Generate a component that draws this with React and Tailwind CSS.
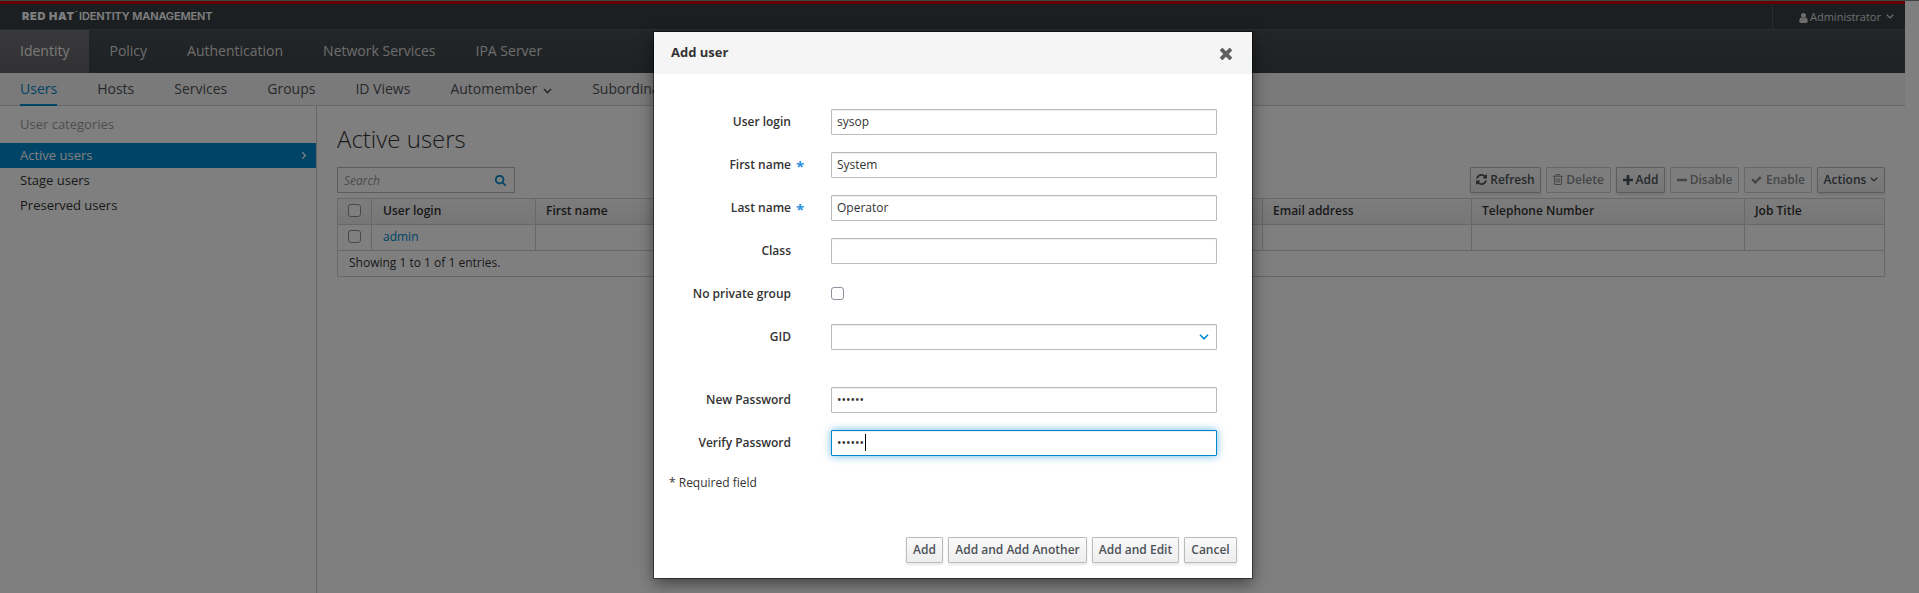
import React from "react";

const ICONS = {
  user: ["0 128 1280 1536", "M1280 1399q0 109-62.5 187t-150.5 78h-854q-88 0-150.5-78t-62.5-187q0-85 8.5-160.5t31.5-152 58.5-131 94-89 134.5-34.5q131 128 313 128t313-128q76 0 134.5 34.5t94 89 58.5 131 31.5 152 8.5 160.5zm-256-887q0 159-112.5 271.5t-271.5 112.5-271.5-112.5-112.5-271.5 112.5-271.5 271.5-112.5 271.5 112.5 112.5 271.5z"],
  refresh: ["128 128 1536 1536", "M1639 1056q0 5-1 7-64 268-268 434.5t-478 166.5q-146 0-282.5-55t-243.5-157l-129 129q-19 19-45 19t-45-19-19-45v-448q0-26 19-45t45-19h448q26 0 45 19t19 45-19 45l-137 137q71 66 161 102t187 36q134 0 250-65t186-179q11-17 53-117 8-23 30-23h192q13 0 22.5 9.5t9.5 22.5zm25-800v448q0 26-19 45t-45 19h-448q-26 0-45-19t-19-45 19-45l138-138q-148-137-349-137-134 0-250 65t-186 179q-11 17-53 117-8 23-30 23h-199q-13 0-22.5-9.5t-9.5-22.5v-7q65-268 270-434.5t480-166.5q146 0 284 55.5t245 156.5l130-129q19-19 45-19t45 19 19 45z"],
  trash: ["192 128 1408 1536", "M704 736v576q0 14-9 23t-23 9h-64q-14 0-23-9t-9-23v-576q0-14 9-23t23-9h64q14 0 23 9t9 23zm256 0v576q0 14-9 23t-23 9h-64q-14 0-23-9t-9-23v-576q0-14 9-23t23-9h64q14 0 23 9t9 23zm256 0v576q0 14-9 23t-23 9h-64q-14 0-23-9t-9-23v-576q0-14 9-23t23-9h64q14 0 23 9t9 23zm128 724v-948h-896v948q0 22 7 40.5t14.5 27 10.5 8.5h832q3 0 10.5-8.5t14.5-27 7-40.5zm-672-1076h448l-48-117q-7-9-17-11h-317q-10 2-17 11zm928 32v64q0 14-9 23t-23 9h-96v948q0 83-47 143.5t-113 60.5h-832q-66 0-113-58.5t-47-141.5v-952h-96q-14 0-23-9t-9-23v-64q0-14 9-23t23-9h309l70-167q15-37 54-63t79-26h320q40 0 79 26t54 63l70 167h309q14 0 23 9t9 23z"],
  plus: ["192 128 1408 1408", "M1600 736v192q0 40-28 68t-68 28h-416v416q0 40-28 68t-68 28h-192q-40 0-68-28t-28-68v-416h-416q-40 0-68-28t-28-68v-192q0-40 28-68t68-28h416v-416q0-40 28-68t68-28h192q40 0 68 28t28 68v416h416q40 0 68 28t28 68z"],
  minus: ["192 128 1408 1408", "M1600 736v192q0 40-28 68t-68 28h-1216q-40 0-68-28t-28-68v-192q0-40 28-68t68-28h1216q40 0 68 28t28 68z"],
  check: ["100 128 1600 1408", "M1671 566q0 40-28 68l-724 724-136 136q-28 28-68 28t-68-28l-136-136-362-362q-28-28-28-68t28-68l136-136q28-28 68-28t68 28l294 295 656-657q28-28 68-28t68 28l136 136q28 28 28 68z"],
  times: ["302 366 1188 1188", "M1490 1322q0 40-28 68l-136 136q-28 28-68 28t-68-28l-294-294-294 294q-28 28-68 28t-68-28l-136-136q-28-28-28-68t28-68l294-294-294-294q-28-28-28-68t28-68l136-136q28-28 68-28t68 28l294 294 294-294q28-28 68-28t68 28l136 136q28 28 28 68t-28 68l-294 294 294 294q28 28 28 68z"],
  search: ["64 128 1664 1664", "M1216 832q0-185-131.5-316.5t-316.5-131.5-316.5 131.5-131.5 316.5 131.5 316.5 316.5 131.5 316.5-131.5 131.5-316.5zm512 832q0 52-38 90t-90 38q-54 0-90-38l-343-342q-179 124-399 124-143 0-273.5-55.5t-225-150-150-225-55.5-273.5 55.5-273.5 150-225 225-150 273.5-55.5 273.5 55.5 225 150 150 225 55.5 273.5q0 220-124 399l343 343q37 37 37 90z"],
};

function Icon({ name, className }) {
  const [viewBox, d] = ICONS[name];
  return (
    <svg viewBox={viewBox} className={"shrink-0 fill-current " + className} aria-hidden="true">
      <path d={d} />
    </svg>
  );
}

function Chevron({ className }) {
  return (
    <svg viewBox="0 0 10 6" className={"shrink-0 fill-none stroke-current " + className} strokeWidth="1.6" aria-hidden="true">
      <path d="M1 .8l4 4 4-4" />
    </svg>
  );
}

function Checkbox({ className = "" }) {
  return <input type="checkbox" className={"size-[13px] appearance-none rounded-[3px] border border-[#8f8f9d] bg-white " + className} />;
}

function Button({ children, disabled, className = "" }) {
  const tone = disabled
    ? "border-[#d1d1d1] bg-[#fafafa] text-[#8b8d8f]"
    : "border-[#bbb] bg-linear-to-b from-[#fafafa] to-[#ededed] text-[#4d5258] shadow-[0_2px_3px_rgba(3,3,3,0.1)]";
  return (
    <button
      type="button"
      disabled={disabled}
      className={"flex h-[26px] shrink-0 items-center justify-center rounded-[1px] border pb-px text-xs font-semibold whitespace-nowrap " + tone + " " + className}
    >
      {children}
    </button>
  );
}

const TABS = ["Policy", "Authentication", "Network Services", "IPA Server"];
const SUBTABS = ["Hosts", "Services", "Groups", "ID Views"];
const COLUMNS = [
  ["User login", "w-[164px] pl-[11px]"],
  ["First name", "w-[182px] pl-[10px]"],
  ["Last name", "w-[181px] pl-[10px]"],
  ["Status", "w-[182px] pl-[10px]"],
  ["UID", "w-[182px] pl-[10px]"],
  ["Email address", "w-[209px] pl-[10px]"],
  ["Telephone Number", "w-[273px] pl-[10px]"],
  ["Job Title", "flex-1 pl-[10px]"],
];

function Header() {
  return (
    <header className="border-t-3 border-[#c00]">
      <div className="flex h-[26px] items-stretch justify-between border-b border-[#53565b] bg-[#393f44] text-white">
        <div className="flex items-center pb-px pl-[22px] font-['Inter'] text-[11px] leading-none whitespace-nowrap">
          <span className="w-[57px] font-black tracking-[0.7px]">RED HAT<span className="align-top text-[4px] tracking-normal">™</span></span>
          <span className="font-semibold tracking-[-0.12px]">IDENTITY MANAGEMENT</span>
        </div>
        <div className="flex w-[133px] items-center border-l border-[#53565b] pt-[2px] pl-[26px] text-[11px] text-[#dbdada]">
          <Icon name="user" className="h-[10px] w-[9px]" />
          <span className="ml-[2px]">Administrator</span>
          <Chevron className="mb-[3px] ml-[5px] h-[5px] w-[8px]" />
        </div>
      </div>
      <nav className="flex h-[43px] bg-linear-to-b from-[#474c50] to-[#3c4449] text-sm text-[#dbdada]">
        <a className="flex items-center bg-linear-to-b from-[#727276] to-[#646468] px-5 pb-px text-[#f1f1f1]">Identity</a>
        {TABS.map((t) => (
          <a key={t} className="flex items-center px-5 pb-px">{t}</a>
        ))}
      </nav>
      <nav className="flex h-[33px] gap-10 border-b border-[#d1d1d1] bg-[#f5f5f5] pl-5 text-sm text-[#4d5258]">
        <a className="-mb-px flex items-center border-b-2 border-[#0088ce] text-[#0088ce]">Users</a>
        {SUBTABS.map((t) => (
          <a key={t} className="flex items-center">{t}</a>
        ))}
        <a className="flex items-center">
          Automember
          <Chevron className="mt-[3px] ml-[6px] h-[6px] w-[9px]" />
        </a>
        <a className="flex items-center whitespace-nowrap">Subordinate IDs</a>
      </nav>
    </header>
  );
}

function Sidebar() {
  return (
    <aside className="flex w-[317px] shrink-0 flex-col border-r border-[#d1d1d1] text-[13px]">
      <h2 className="flex h-[37px] items-center pl-5 text-[#9c9c9c]">User categories</h2>
      <a className="flex h-[25px] items-center justify-between bg-[#0088ce] pr-[8px] pl-5 text-white">
        Active users
        <Chevron className="h-[5px] w-[8px] -rotate-90" />
      </a>
      <a className="flex h-[25px] items-center pl-5">Stage users</a>
      <a className="flex h-[25px] items-center pl-5">Preserved users</a>
    </aside>
  );
}

function UsersTable() {
  return (
    <div className="mt-[5px] border border-[#d1d1d1] text-xs">
      <div className="flex h-[26px] border-b border-[#d1d1d1] bg-linear-to-b from-[#fafafa] to-[#ededed] font-semibold">
        <div className="flex w-[33px] items-center justify-center">
          <Checkbox className="mb-[2px]" />
        </div>
        {COLUMNS.map(([label, box]) => (
          <div key={label} className={"flex items-center border-l border-[#d1d1d1] pb-px " + box}>{label}</div>
        ))}
      </div>
      <div className="flex h-[26px] border-b border-[#d1d1d1]">
        <div className="flex w-[33px] items-center justify-center">
          <Checkbox className="mb-[2px]" />
        </div>
        {COLUMNS.map(([label, box], i) => (
          <div key={label} className={"flex items-center border-l border-[#d1d1d1] pb-px text-[#0088ce] " + box}>{i === 0 ? "admin" : ""}</div>
        ))}
      </div>
      <div className="flex h-[25px] items-center pb-[2px] pl-[11px]">Showing 1 to 1 of 1 entries.</div>
    </div>
  );
}

function ActiveUsers() {
  return (
    <section className="flex-1 pr-5 pl-5">
      <h1 className="pt-[16px] text-2xl leading-[33px] font-light">Active users</h1>
      <div className="mt-[12px] flex justify-between">
        <div className="flex h-[26px] w-[178px] items-center justify-between border border-[#bbb] pt-px pr-[8px] pl-[6px] text-xs text-[#999] italic">
          Search
          <Icon name="search" className="size-[11px] text-[#0088ce]" />
        </div>
        <div className="flex gap-[5px]">
          <Button className="w-[71px] gap-[3px]"><Icon name="refresh" className="size-[11px]" />Refresh</Button>
          <Button disabled className="w-[65px] gap-[3px]"><Icon name="trash" className="h-[11px] w-[10px]" />Delete</Button>
          <Button className="w-[49px] gap-[3px]"><Icon name="plus" className="size-[10px]" />Add</Button>
          <Button disabled className="w-[69px] gap-[3px]"><Icon name="minus" className="size-[10px]" />Disable</Button>
          <Button disabled className="w-[68px] gap-[4px]"><Icon name="check" className="h-[9px] w-[11px]" />Enable</Button>
          <Button className="w-[68px] gap-[4px]">Actions<Chevron className="h-[5px] w-[8px]" /></Button>
        </div>
      </div>
      <UsersTable />
    </section>
  );
}

function Field({ label, required, gap = "mt-[17px]", children }) {
  return (
    <div className={"flex h-[26px] items-center " + gap}>
      <label className="w-[137px] pb-px text-right text-xs font-semibold">{label}</label>
      <span className="w-[40px] pt-0.5 pl-[5px] text-[15px] leading-none font-bold text-[#2b8fe0]">{required ? "*" : ""}</span>
      {children}
    </div>
  );
}

const BOX = "flex h-[26px] w-[386px] items-center rounded-[1px] border bg-white px-[5px] pb-px text-xs text-[#333]";
const PLAIN = " border-[#bbb] shadow-[inset_0_1px_1px_rgba(3,3,3,0.075)]";
const FOCUS = " border-[#0088ce] shadow-[inset_0_1px_1px_rgba(3,3,3,0.075),0_0_8px_rgba(0,136,206,0.6)]";

function AddUserDialog() {
  return (
    <div role="dialog" className="mt-8 ml-[654px] flex h-[546px] w-[598px] flex-col bg-white shadow-[0_0_0_1px_rgba(0,0,0,0.45),0_5px_15px_rgba(0,0,0,0.5)]">
      <div className="flex h-[42px] items-center justify-between bg-[#f5f5f5] pr-5 pl-[17px]">
        <h2 className="text-[13px] font-bold">Add user</h2>
        <Icon name="times" className="mt-[2px] size-[12px] text-[#5f5f5f]" />
      </div>
      <div className="flex flex-1 flex-col">
        <Field label="User login" gap="mt-[35px]">
          <input defaultValue="sysop" className={BOX + PLAIN} />
        </Field>
        <Field label="First name" required>
          <input defaultValue="System" className={BOX + PLAIN} />
        </Field>
        <Field label="Last name" required>
          <input defaultValue="Operator" className={BOX + PLAIN} />
        </Field>
        <Field label="Class">
          <input className={BOX + PLAIN} />
        </Field>
        <Field label="No private group">
          <Checkbox className="mb-px" />
        </Field>
        <Field label="GID">
          <div className={BOX + PLAIN + " justify-end"}>
            <Chevron className="mr-[2px] h-[6px] w-[10px] text-[#0088ce]" />
          </div>
        </Field>
        <Field label="New Password" gap="mt-[37px]">
          <div className={BOX + PLAIN}>••••••</div>
        </Field>
        <Field label="Verify Password">
          <div className={BOX + FOCUS}>
            ••••••
            <span className="ml-px h-[17px] w-px bg-black" />
          </div>
        </Field>
        <p className="mt-[17px] pl-[15px] text-xs leading-5">* Required field</p>
      </div>
      <div className="flex justify-end gap-[5px] pr-[15px] pb-[15px]">
        <Button className="w-[37px]">Add</Button>
        <Button className="w-[139px]">Add and Add Another</Button>
        <Button className="w-[87px]">Add and Edit</Button>
        <Button className="w-[53px]">Cancel</Button>
      </div>
    </div>
  );
}

export default function App() {
  return (
    <div className="relative h-[593px] w-[1919px] overflow-hidden bg-white font-['Open_Sans',sans-serif] text-[#333]">
      <div className="flex h-full w-[1905px] flex-col pt-px">
        <Header />
        <div className="flex flex-1">
          <Sidebar />
          <ActiveUsers />
        </div>
      </div>
      <div className="absolute inset-0 border-t border-[#3f4345] bg-black/50">
        <div className="-mt-px flow-root">
          <AddUserDialog />
        </div>
      </div>
    </div>
  );
}
